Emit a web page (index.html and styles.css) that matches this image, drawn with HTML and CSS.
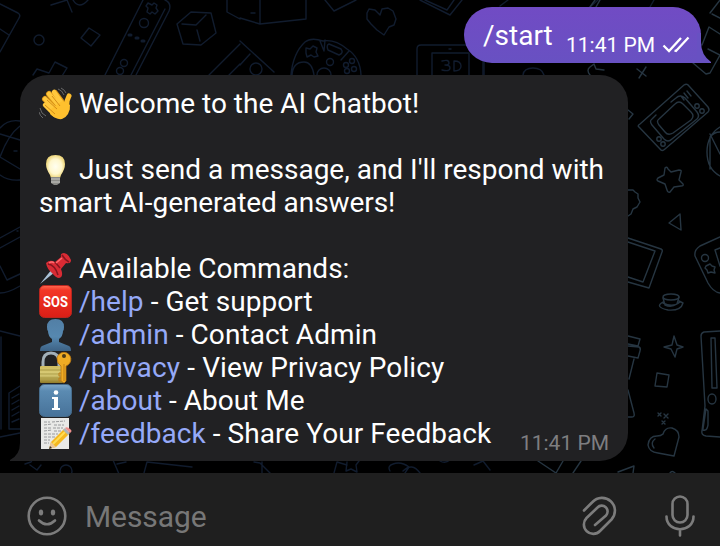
FILE: index.html
```html
<!DOCTYPE html>
<html lang="en">
<head>
<meta charset="utf-8">
<title>AI Chatbot</title>
<link rel="stylesheet" href="styles.css">
</head>
<body>
<main class="app">
<svg class="wallpaper" viewBox="0 0 720 473" aria-hidden="true">
  <g class="doodles" stroke="#111c2e">
    <path d="M0 4l18 9q3 2 1 5L0 52M0 29l9 6"/>
    <circle cx="39" cy="40" r="5"/>
    <path d="M89 28l11 7-9 11-10-8z"/>
    <path d="M105 75L143 0M131 75L165 9M136 75l33-64q3-8-4-11"/>
    <path d="M148 3l4 2 2-2 3 2-1 3 2 3-3 3-3-2-2 2-3-2 1-4-2-2z"/>
    <circle cx="144" cy="23" r="4.5"/><circle cx="124" cy="63" r="3.5"/><circle cx="120" cy="71" r="3.5"/>
    <path d="M129 35h2M136 38h2M142 41h2" stroke-width="3"/>
    <path d="M191 12l20 1 5 20-15 12-18-1-6-20zM182 24l14 1 10-10M197 30l3 11"/>
    <path d="M33 75l4-6 12 4 6-11 12 6-5 8M51 5l16-5M67 0l5 12M73 0q6 10 15 0"/>
    <path d="M209 75l31-31M229 75l11-11M227 0v12l13 7M240 18l20 6 46-5V0M260 0v24M251 13h4"/>
    <path d="M325 0l9 11 22-11M420 0l30 15 12-15M425 0l22 10 7-10"/>
    <path d="M367 13l2-4 6 1 5 5 2-6 6-1 5 3 3 8-2 6-5 2-5 8-7-5-6-6-4-5z"/>
    <path d="M240 41l34 31M240 65l10-11"/><circle cx="256" cy="69" r="6"/>
    <path d="M291 75q2-22 14-33 6-5 18-1 12-2 24 8 13 8 14 26M292 75q1-13 12-13 8 0 10 13M320 41l4 10 1-11M341 60l8-9"/>
    <path d="M306 48l4 1 3-3 4 2-1 4 2 4-4 1-3-2-4 2-1-4zM329 44l12 5q3 4-2 6l-11-5q-2-5 1-6"/>
    <circle cx="330" cy="62" r="3.5"/><circle cx="324" cy="75" r="7"/><circle cx="352" cy="61" r="2.5"/><circle cx="346" cy="65" r="2.5"/><circle cx="354" cy="69" r="2.5"/><circle cx="347" cy="71" r="2.5"/>
    <path d="M417 75V49q0-4 4-4h57q5 0 5 5v25M432 75V53h37v22M449 49h2"/>
    <path d="M442 61q7-2 7 2 0 2-4 2 5 0 5 3 0 4-8 2M454 61v10q7 0 7-5t-7-5"/>
    <path d="M484 75V51M523 75q1-7 10-7t11 7M500 6l8-6M590 7l8-7M650 7l4-7"/>
    <path d="M20 121Q8 119 0 128M0 134l20 6M0 157q8-22 20-31M0 157l20 12M20 180q-12 1-20-5M14 151h3"/>
    <path d="M0 238l20-11M0 248l20-11M0 266l7 14 13-6M0 293q8 0 20-7M17 231h1M0 331l20 5M1 337v92M20 386l-11 7v36h11M12 398l7-4M12 404l7-4M12 410l7-4M12 416l7-4M12 422l7-3M0 437l20-4"/>
    <path d="M25 464l6-2 3-5M30 465l7 5 4-5"/><circle cx="66" cy="471" r="6"/>
    <path d="M113 460l6 14M117 464l9-2M144 473l3-11 45 5"/>
    <path d="M254 462l6 1 11 11M262 462v12M334 473l3-11 10 3M347 462l-1 9 5-2 6 3-1-7 3-4M390 471q-3-5 3-7 8-3 16 3l-4 6M403 471q9-9 17 2M440 461q5 3 10-1M474 465l9-4 7 9"/>
  </g>
  <g class="doodles" stroke="#263541">
    <path d="M596 7l4-7M590 7l5-7M712 14l8 4M720 55l-12-6M710 13l10-13M702 45l7-18 11 7M693 63l13 11 4-1 10-18"/>
    <path d="M637 69l9 7M646 67l-7 11"/>
    <path d="M640 124l44-39q3-2 5 1l19 21q2 3 0 5l-43 37q-3 3-5 0l-21-22q-2-1 1-3z"/>
    <path d="M659 119l16-15q4-4 8 0l8 8q4 4 0 8l-18 13q-5 3-8-1l-6-7q-3-4 0-6zM656 115l-4 4q-3 2 0 6l12 14q4 4 8 0l25-20q3-3 0-7l-12-14q-5-4-9 0l-5 4M684 93l4 5M687 91l4 5M681 96l3 4"/>
    <circle cx="697" cy="106" r="2.2"/><circle cx="702" cy="111" r="2.2"/><circle cx="659" cy="139" r="2.2"/><circle cx="663" cy="144" r="2.2"/>
    <path d="M665 168q2-2 3 1l3 3 8-2q3 0 2 2l-2 8 4 4q1 2-2 2l-7 1-4 5q-2 1-3-2l-2-6-7-3q-2-1 0-3l6-3z"/>
    <path d="M669 223l11-9 1 16zM628 110l5 4-4 5"/>
    <path d="M628 190h5l2 2 3 2v4l2 4-3 5-4 2-2 5-3 2"/>
    <path d="M720 127q-13 8-13 25t13 24M710 137q4-5 10-5M710 134l10 20M710 169V138"/>
    <path d="M628 238l33 11q2 1 1 3l-13 36-21-6M628 242l27 9-12 31-15-5"/>
    <path d="M720 237l-20 9q-6 4-5 10l13 27q5 9 12 10M720 248l-5 2 5 16"/>
    <circle cx="705" cy="258" r="3.5"/><path d="M706 266l4-2 2 2 3 1-1 3 1 3-4-1-3 1-1-3-2-2z"/>
    <ellipse cx="671" cy="297" rx="8" ry="3"/><path d="M663 298l2 7q6 3 12-1l2-7M663 302q-9 5 5 8 13 1 15-7l-4-2M663 303q10 5 17-1"/>
    <path d="M674 336l3 9 6 2-6 2-2 8-4-8-7-2 8-2zM657 373l12 2-2 12-12-1z"/>
    <path d="M628 336l12 3-2 7-10-2M628 346l11 1q2 1 1 4l-2 7-10-2M634 359l-5 20M628 390l6 23q1 4-2 4h-4"/>
    <path d="M658 413l3 3M661 413l-3 3M664 414l4 4M668 414l-4 4M662 421l3 3M665 421l-3 3"/>
    <path d="M663 434q2-7 9-6 7 2 7 9l-5 19-16-3q-9-1-10-8 1-9 9-9 4 0 6-2M655 439q-5 4-1 9"/>
    <path d="M720 331l-16 1q-3 1-3 4l4 70-3 25q-1 4 4 5l14 1M711 338h4l2 50h-5zM706 409l-3 20q0 2 2 1 2 0 3-5v-14z"/><ellipse cx="712" cy="399" rx="4" ry="5"/>
    <path d="M618 472l16-6-1 7M670 473q2-3 5 0M538 461l18 12 7-12M573 473l8-12M590 75q-4-5 0-8l4-3 2 5 8 1"/>
  </g>
</svg>

<section class="chat">
  <article class="bubble outgoing">
    <span class="text">/start</span>
    <span class="time">11:41 PM</span>
    <svg class="checks" viewBox="0 0 28 18"><path d="M1.500 9.500l5.500 5.500L19 2M12.500 14.500l1.500 .5L26.500 1.500"/></svg>
    <svg class="tail-out" viewBox="0 0 14 30"><path d="M0 0h4v9q0 13 10 20v1H0z"/></svg>
  </article>

  <article class="bubble incoming">
    <svg class="tail-in" viewBox="0 0 11 38"><path d="M10 0V20Q10 32 0 37v1h11V0z"/></svg>
    <p class="line"><svg class="emoji" viewBox="0 0 33 33">
      <g stroke-linecap="round" fill="none"><path d="M6 12l12 12M10 7l12 14M16 6l9 12" stroke="#d99316" stroke-width="6"/><path d="M6 12l12 12M10 7l12 14M15 5l10 14M6 18l10 10" stroke="#ffc83d" stroke-width="4.5"/><path d="M30 9q-3 5-2 13" stroke="#fdbe2d" stroke-width="5"/></g>
      <path d="M12 22L23 14l5 2 3 2q0 11-8 14-6 1-12-5z" fill="#ffc02e"/><path d="M8 13l10 9M13 9l8 10M6 18l10 9" stroke="#d48d17" fill="none"/>
      <path d="M19 2q4 1 6 6M22 1q4 2 5 5M1 21q1 6 6 8M0 25q1 4 4 6" stroke="#686868" fill="none"/>
    </svg><span>Welcome to the AI Chatbot!</span></p>
    <p class="line blank"></p>
    <p class="line"><svg class="emoji" viewBox="0 0 33 33">
      <defs><radialGradient id="glow"><stop stop-color="#fffef0"/><stop offset=".65" stop-color="#fff7cd"/><stop offset="1" stop-color="#eed77d"/></radialGradient></defs>
      <path d="M11 22Q7 16 7 11 7 2 16.500 2T26 11q0 5-4 11l-1 3h-9z" fill="url(#glow)"/><path d="M12 24h9v6l-3 2h-3l-3-2z" fill="#8a8a86"/><path d="M12 26h9M12 29h9" stroke="#c7c7c2"/>
    </svg><span>Just send a message, and I'll respond with</span></p>
    <p class="line tight"><span>smart AI-generated answers!</span></p>
    <p class="line blank"></p>
    <p class="line"><svg class="emoji" viewBox="0 0 33 33">
      <path d="M1 32l12-15 3 3z" fill="#a9c1d6"/><path d="M7 11q4-4 9-1l6-5q-1-4 3-4 5 1 7 7 0 4-5 3l-5 6q3 8-2 9-3 0-7-5-5-4-6-10z" fill="#d92b34"/><path d="M9 12q7 1 10 11M16 10l5 6M23 3q3 5 7 7" stroke="#84151f" fill="none" stroke-width="1.500"/><path d="M17 11l6-5M10 11q3-2 5 0" stroke="#ff6b70" stroke-width="1.500" fill="none"/>
    </svg><span>Available Commands:</span></p>
    <p class="line loose"><svg class="emoji" viewBox="0 0 33 33">
      <defs><linearGradient id="red" x2="0" y2="1"><stop stop-color="#ff6a51"/><stop offset=".15" stop-color="#f33627"/><stop offset="1" stop-color="#d91e16"/></linearGradient></defs>
      <rect x=".5" y=".5" width="32" height="32" rx="5" fill="url(#red)" stroke="#b9261f"/><text x="4" y="22" textLength="25" lengthAdjust="spacingAndGlyphs" class="sos">SOS</text>
    </svg><span><a>/help</a> - Get support</span></p>
    <p class="line loose"><svg class="emoji" viewBox="0 0 33 33">
      <defs><linearGradient id="person" x2="0" y2="1"><stop stop-color="#527fa5"/><stop offset=".55" stop-color="#5688b0"/><stop offset="1" stop-color="#3d6285"/></linearGradient></defs>
      <path d="M8 9q0-8 8.500-8T25 9q0 3-1 4 0 5-4 8v3l10 4q2 1 2 5H1q0-4 2-5l10-4v-3q-4-3-4-8-1-1-1-4z" fill="url(#person)"/>
    </svg><span><a>/admin</a> - Contact Admin</span></p>
    <p class="line looser"><svg class="emoji" viewBox="0 0 33 33">
      <defs><linearGradient id="brass" x2="0" y2="1"><stop stop-color="#d1bd60"/><stop offset=".5" stop-color="#d8cc79"/><stop offset="1" stop-color="#917c28"/></linearGradient></defs>
      <path d="M4 17V11q0-9 8-9t8 9v6" fill="none" stroke="#a2afb8" stroke-width="3"/><rect x="1" y="15" width="23" height="17" rx="1" fill="url(#brass)"/><path d="M1 19h22M1 23h22M1 27h22" stroke="#a99a45"/>
      <path d="M18 7a7 7 0 1 1 9 8v15l-2 2-3-2V15q-4-2-4-8z" fill="#efac24" stroke="#b97611" stroke-width=".8"/><circle cx="25" cy="5" r="2" fill="#4b3a19"/><path d="M25 13v17M22 22h-2v3h2M22 27h-2v3h2" stroke="#c07d15" fill="none"/>
    </svg><span><a>/privacy</a> - View Privacy Policy</span></p>
    <p class="line"><svg class="emoji" viewBox="0 0 33 33">
      <defs><linearGradient id="blue" x2="0" y2="1"><stop stop-color="#7fa8ca"/><stop offset=".2" stop-color="#5b8bb2"/><stop offset="1" stop-color="#477299"/></linearGradient></defs>
      <rect x=".5" y=".5" width="32" height="32" rx="5" fill="url(#blue)" stroke="#476d8d"/><circle cx="17" cy="8.500" r="2.300" fill="#fff"/><path d="M13 13h6v11h2v2h-8v-2h2v-9h-2z" fill="#fff"/>
    </svg><span><a>/about</a> - About Me</span></p>
    <p class="line loose"><svg class="emoji" viewBox="0 0 33 33">
      <path d="M2 1h28v31H2z" fill="#e9e9e7"/><path d="M5 5h6M13 5l13-1M5 8l8-1M15 8h10M5 11h7M14 11h10M5 14l8-1M15 14h8M5 17h14M5 20h11M5 23h6M5 26h5" stroke="#909193" stroke-width=".9" stroke-dasharray="3 1"/>
      <path d="M12 25L25 12l5 5-13 13-7 2z" fill="#f6b820"/><path d="M14 27l12-12" stroke="#ffdd55" stroke-width="2"/><path d="M12 25l5 5-7 2z" fill="#ecc79a"/><path d="M11 29l2 2-3 1z" fill="#333"/><path d="M24 13l2-2 5 5-2 2z" fill="#adb5b8"/><path d="M26 11q2-2 5 1 3 2 0 4z" fill="#ee8f8c"/>
    </svg><span><a>/feedback</a> - Share Your Feedback</span></p>
    <time class="time received">11:41 PM</time>
  </article>
</section>

<footer class="composer">
  <svg class="icon smile" viewBox="0 0 40 40"><circle cx="20" cy="20" r="18.300"/><path d="M12 24.500q8 7.500 16 0"/><ellipse class="eye" cx="14" cy="16.500" rx="2.200" ry="2.900"/><ellipse class="eye" cx="26" cy="16.500" rx="2.200" ry="2.900"/></svg>
  <span class="placeholder">Message</span>
  <svg class="icon clip" viewBox="0 0 36 40"><path d="M3 14.500L11.500 6A12.700 12.700 0 0 1 30.500 23.500L19 35A9.300 9.300 0 0 1 5.500 22L16.500 11.500A5.700 5.700 0 0 1 25 19.500L14 29"/></svg>
  <svg class="icon mic" viewBox="0 0 30 42"><rect x="7.500" y="1.500" width="15" height="26" rx="7.500"/><path d="M1.500 21.500c0 17 27 17 27 0M15 34.500v6"/></svg>
</footer>
</main>
</body>
</html>
```

FILE: styles.css
```css
* { box-sizing: border-box; }
body { margin: 0; background: #000; font-family: Roboto, sans-serif; }
.app { position: relative; width: 720px; height: 546px; overflow: hidden; display: flex; flex-direction: column; }
.wallpaper { position: absolute; top: 0; left: 0; width: 720px; height: 473px; }
.doodles { fill: none; stroke-width: 1.4; stroke-linejoin: round; stroke-linecap: round; }
.chat { position: relative; height: 473px; padding: 7px 19px 0 20px; display: flex; flex-direction: column; }
.bubble { position: relative; color: #fff; }
.outgoing { align-self: flex-end; width: 237px; height: 56px; padding-left: 19px; border-radius: 28px 28px 0 28px; background: linear-gradient(#714bc4, #6851c2); display: flex; }
.text { width: 83px; font-size: 28px; line-height: 57px; }
.time { font-size: 21px; line-height: 25px; white-space: nowrap; }
.outgoing .time { margin-top: 26px; width: 96px; }
.checks { width: 28px; height: 18px; margin-top: 29px; fill: none; stroke: #fff; stroke-width: 2.3; }
.tail-out { position: absolute; right: -10px; bottom: 0; width: 14px; height: 30px; fill: #6851c2; }
.incoming { width: 608px; height: 386px; margin-top: 12px; padding: 12px 19px; border-radius: 28px 28px 28px 0; background: #212123; }
.tail-in { position: absolute; left: -10px; bottom: 0; width: 11px; height: 38px; fill: #212123; }
.line { position: relative; margin: 0; height: 33px; line-height: 33px; font-size: 28px; display: flex; white-space: nowrap; }
.tight { letter-spacing: -0.07px; }
.loose { letter-spacing: 0.06px; }
.looser { letter-spacing: 0.13px; }
.emoji { width: 33px; height: 33px; margin-right: 7px; flex: none; }
.sos { fill: #fff; font: 700 15.5px Roboto, sans-serif; }
.line a { color: #95a9f8; }
.received { position: absolute; right: 19px; bottom: 5px; color: #7e7e80; }
.composer { position: relative; height: 73px; padding: 0 25px 0 27px; display: flex; align-items: center; background: #1f1f1f; }
.icon { fill: none; stroke: #7c7c7c; stroke-width: 2.6; stroke-linecap: round; }
.smile { width: 40px; height: 40px; margin-top: 13px; }
.eye { fill: #7c7c7c; stroke: none; }
.placeholder { margin: 13px auto 0 18px; color: #777; font-size: 30px; letter-spacing: -0.1px; }
.clip { width: 36px; height: 40px; margin: 13px 48px 0 0; }
.mic { width: 30px; height: 42px; margin-top: 12px; }
```
